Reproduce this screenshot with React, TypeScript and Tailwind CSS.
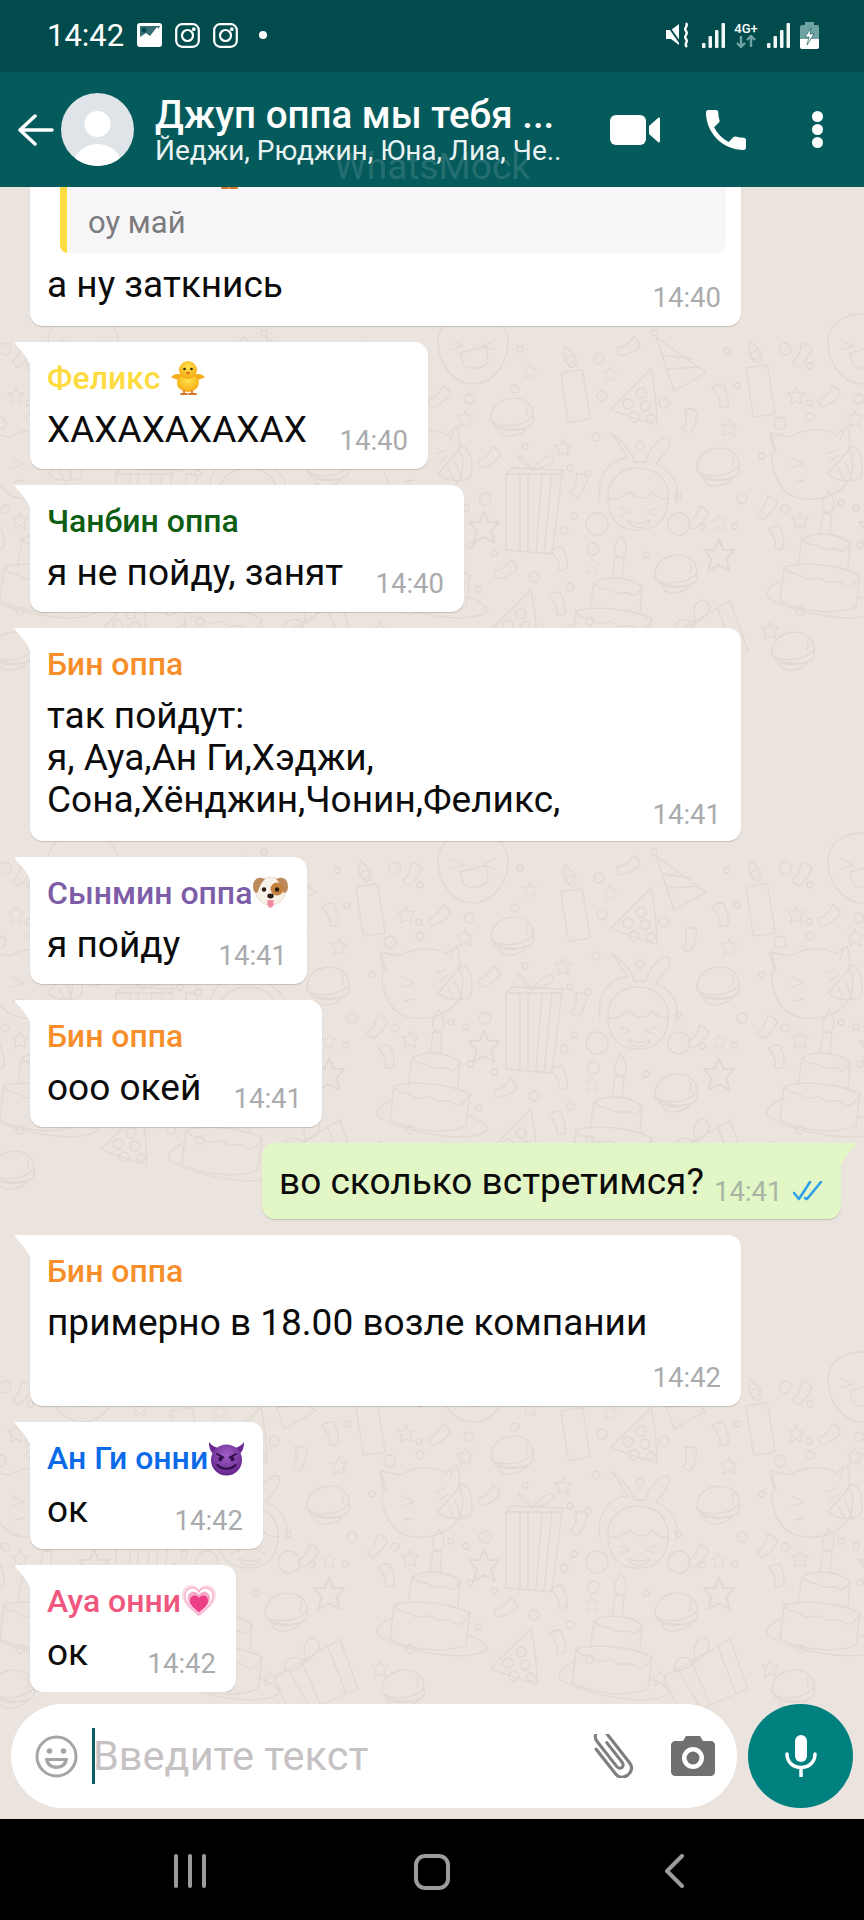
import { ReactNode } from "react";

type MessageProps = {
  name?: string;
  nameColor?: string;
  emoji?: ReactNode;
  time: string;
  width: string;
  bottom?: string;
  timeDrop?: string;
  timeBelow?: boolean;
  children: ReactNode;
};

function Tail() {
  return (
    <svg className="absolute left-[-15px] top-0" width="16" height="24" viewBox="0 0 16 24">
      <path d="M0 0H16V24C12 15 6 8 1 3Q0 1.500 0 0Z" fill="#fff" />
    </svg>
  );
}

function Message({ name, nameColor, emoji, time, width, bottom = "pb-[18px]", timeDrop = "-mb-[5px]", timeBelow, children }: MessageProps) {
  return (
    <div className={`relative shrink-0 rounded-[13px] rounded-tl-none bg-white pl-[17px] pr-[20px] pt-[18px] shadow-[0_1px_1px_rgba(0,0,0,0.16)] ${width} ${bottom}`}>
      <Tail />
      <div className={`flex h-[36px] items-center text-[32px] font-medium leading-[36px] ${nameColor}`}>
        <span className="whitespace-nowrap">{name}</span>
        {emoji}
      </div>
      <div className={timeBelow ? "mt-[13px]" : "mt-[13px] flex items-end justify-between"}>
        <div className="whitespace-pre text-[37px] leading-[42px] text-[#0b0b0b]">{children}</div>
        <div className={`h-[30px] text-right text-[27.500px] leading-[30px] text-[#a9abad] ${timeDrop} ${timeBelow ? "mt-[19px]" : ""}`}>{time}</div>
      </div>
    </div>
  );
}

function Chick() {
  return (
    <svg className="ml-[10px] shrink-0" width="36" height="36" viewBox="0 0 36 36">
      <defs>
        <radialGradient id="chick" cx="50%" cy="35%" r="65%">
          <stop offset="0" stopColor="#ffe24a" />
          <stop offset="1" stopColor="#f6a914" />
        </radialGradient>
      </defs>
      <path d="M1 17C6 13 9 14 12 15L12 21C8 20 4 19 1 17ZM35 17C30 13 27 14 24 15L24 21C28 20 32 19 35 17Z" fill="#f5ad1c" />
      <ellipse cx="18" cy="23" rx="11" ry="9" fill="url(#chick)" />
      <circle cx="18" cy="10" r="9" fill="url(#chick)" />
      <circle cx="14.500" cy="9" r="1.300" fill="#3a2410" />
      <circle cx="21.500" cy="9" r="1.300" fill="#3a2410" />
      <path d="M15.500 12L20.500 12L18 15Z" fill="#e8641a" />
      <path d="M11 34H17M19 34H26M14 31V34M22 31V34" stroke="#d9752a" strokeWidth="1.800" strokeLinecap="round" />
    </svg>
  );
}

function Dog() {
  return (
    <svg className="shrink-0" width="37" height="34" viewBox="0 0 37 34">
      <ellipse cx="18.500" cy="15" rx="15" ry="14" fill="#f8f1e8" stroke="#e2d6c6" strokeWidth="0.800" />
      <path d="M10 2C5 1 1 4 1 11C1 16 4 18 6 16C7 11 9 7 13 3Z" fill="#bd8a5c" />
      <path d="M27 2C32 1 36 4 36 11C36 16 33 18 31 16C30 11 28 7 24 3Z" fill="#bd8a5c" />
      <circle cx="25" cy="13" r="6.500" fill="#c2823d" />
      <circle cx="12" cy="13.500" r="2.200" fill="#2b1b12" />
      <circle cx="25" cy="13.500" r="2.200" fill="#2b1b12" />
      <ellipse cx="18.500" cy="20" rx="3.200" ry="2.400" fill="#2b1b12" />
      <path d="M15.500 24H21.500V28C21.500 33 15.500 33 15.500 28Z" fill="#f08ba0" />
    </svg>
  );
}

function Devil() {
  return (
    <svg className="shrink-0" width="37" height="35" viewBox="0 0 37 35">
      <defs>
        <radialGradient id="devil" cx="50%" cy="35%" r="70%">
          <stop offset="0" stopColor="#a060c8" />
          <stop offset="1" stopColor="#5f1f85" />
        </radialGradient>
      </defs>
      <path d="M1 1C1 8 3 12 8 15L12 7C8 7 4 5 1 1ZM36 1C36 8 34 12 29 15L25 7C29 7 33 5 36 1Z" fill="#6a2a92" />
      <circle cx="18.500" cy="19" r="15.500" fill="url(#devil)" />
      <path d="M9 13L15.500 16.500M28 13L21.500 16.500" stroke="#2e0c48" strokeWidth="1.800" strokeLinecap="round" />
      <ellipse cx="12.500" cy="18" rx="2" ry="2.200" fill="#2e0c48" />
      <ellipse cx="24.500" cy="18" rx="2" ry="2.200" fill="#2e0c48" />
      <path d="M9.500 24C14 29 23 29 27.500 24" stroke="#2e0c48" strokeWidth="2" fill="none" strokeLinecap="round" />
    </svg>
  );
}

function Heart() {
  const d = "M18 33C10 26 1 20 1 11C1 5 5 1 10 1C13.500 1 16.500 3 18 6C19.500 3 22.500 1 26 1C31 1 35 5 35 11C35 20 26 26 18 33Z";
  return (
    <svg className="shrink-0" width="36" height="35" viewBox="0 0 36 35">
      <path d={d} fill="#fbdbe8" />
      <g transform="translate(3 3) scale(0.83)">
        <path d={d} fill="#fff" />
        <path d={d} fill="none" stroke="#f7a9c8" strokeWidth="1.500" />
      </g>
      <g transform="translate(6 7) scale(0.66)">
        <path d={d} fill="#f7a9c8" />
      </g>
      <g transform="translate(8.500 11) scale(0.53)">
        <path d={d} fill="#ec3f86" />
      </g>
    </svg>
  );
}

function Candle({ x, y }: { x: number; y: number }) {
  return (
    <g transform={`translate(${x} ${y}) rotate(-9)`}>
      <rect x="-11" y="-22" width="22" height="50" rx="2" />
      <path d="M0 -26C-6 -32 -7 -38 -2 -48C3 -40 8 -36 6 -30C5 -27 3 -25 0 -26Z" />
      <circle cx="0" cy="-33" r="4" />
    </g>
  );
}

function Burger({ x, y }: { x: number; y: number }) {
  return (
    <g transform={`translate(${x} ${y})`}>
      <path d="M-21 3C-24 -25 22 -28 21 -2C22 2 21 6 18 8C8 13 -12 13 -21 3Z" />
      <path d="M-21 3C-12 10 10 10 21 -2M-18 8C-10 14 8 14 18 8M-14 12C-10 22 8 18 14 11M14 -12C16 -8 15 -5 14 -2" />
    </g>
  );
}

function Face({ x, y }: { x: number; y: number }) {
  return (
    <g transform={`translate(${x} ${y})`}>
      <path d="M-35 -12C-35 -30 -20 -40 0 -40C20 -40 35 -30 35 -12C35 12 18 30 0 30C-18 30 -35 12 -35 -12Z" />
      <path d="M-22 -14L-10 -8L-22 -4M22 -14L10 -8L22 -4M-13 -1L13 -8L15 8C8 16 -6 16 -10 10Z" />
    </g>
  );
}

function StripeHat({ x, y }: { x: number; y: number }) {
  return (
    <g transform={`translate(${x} ${y})`}>
      <path d="M-26 -24L-8 30L24 12ZM-19 -6L10 -2M-14 8L18 6" />
      <circle cx="-28" cy="-28" r="3" />
    </g>
  );
}

function DotHat({ x, y }: { x: number; y: number }) {
  return (
    <g transform={`translate(${x} ${y})`}>
      <path d="M16 -32L-24 8C-12 14 8 20 22 24C22 10 20 -12 16 -32Z" />
      <circle cx="6" cy="-8" r="5" />
      <circle cx="-7" cy="3" r="5" />
      <circle cx="10" cy="5" r="5" />
      <circle cx="-1" cy="16" r="5" />
      <circle cx="16" cy="17" r="4" />
    </g>
  );
}

function Cat({ x, y }: { x: number; y: number }) {
  return (
    <g transform={`translate(${x} ${y})`}>
      <path d="M-42 -31L-22 -27C-8 -36 14 -36 24 -29C28 -32 32 -36 35 -37C38 -30 38 -22 37 -14C44 -4 40 14 34 20C20 38 -14 40 -28 26C-40 12 -42 -8 -38 -14C-40 -20 -42 -26 -42 -31Z" />
      <path d="M-40 -28L-36 -12M32 -34L28 -24M-20 -6L-8 0L-20 4M-18 18L-8 16M14 -10L24 -14M18 -2L26 -8" />
      <path d="M16 10L40 -18C50 -16 52 4 48 14C40 18 24 18 16 10ZM26 4L32 15M33 -2L40 15" />
    </g>
  );
}

function Gift({ x, y }: { x: number; y: number }) {
  return (
    <g transform={`translate(${x} ${y})`}>
      <path d="M-28 -34L28 -34L18 46L-28 42ZM-28 -34L-22 -40L30 -38L28 -34M-14 -34L-14 44M-6 -34L-6 44M8 -34L2 44M18 -34L10 44" />
      <path d="M-2 -38C-16 -50 -18 -54 -14 -52C-8 -48 -4 -44 -2 -38ZM-2 -38C8 -50 18 -56 20 -50C20 -44 8 -40 -2 -38Z" />
    </g>
  );
}

function Girl({ x, y }: { x: number; y: number }) {
  return (
    <g transform={`translate(${x} ${y})`}>
      <path d="M-38 6C-42 -18 -28 -36 -10 -36L-26 -60C-20 -56 -6 -44 -4 -32L8 -32C10 -44 22 -58 30 -56C36 -50 24 -38 18 -30C36 -22 42 -8 38 8" />
      <path d="M-30 8C-32 -14 -18 -26 0 -26C18 -26 32 -14 30 8C28 26 18 36 0 36C-18 36 -28 26 -30 8Z" />
      <path d="M-30 4C-20 8 -14 0 -8 -2C-2 6 10 6 14 -2C20 4 26 6 30 4M-18 14L-8 18L-18 22M18 14L8 18L18 22M-10 26C-2 30 6 30 12 26C10 36 -6 36 -10 26Z" />
      <circle cx="-41" cy="30" r="11" />
      <circle cx="41" cy="30" r="11" />
    </g>
  );
}

function Cake({ x, y }: { x: number; y: number }) {
  return (
    <g transform={`translate(${x} ${y})`}>
      <path d="M-36 -2C-50 4 -58 12 -50 18C-20 34 40 44 58 30C56 24 46 18 38 16" />
      <path d="M-36 -14L-40 20C-16 32 16 34 36 26L40 -6C20 -16 -14 -20 -36 -14Z" />
      <path d="M-36 -14C-30 -4 -24 -10 -18 -4C-10 2 -6 -6 2 -2C10 6 16 -4 24 4C30 8 36 2 40 -6" />
      <path d="M-22 -16L-18 -42C-6 -50 18 -48 30 -38L28 -12" />
      <path d="M-18 -42C-12 -34 -6 -38 0 -34C8 -28 14 -36 20 -30C24 -28 28 -34 30 -38" />
      <path d="M0 -47L3 -68L12 -67L10 -47M6 -68C0 -74 2 -80 9 -90C14 -82 16 -76 12 -70Z" />
    </g>
  );
}

function BoxGift({ x, y }: { x: number; y: number }) {
  return (
    <g transform={`translate(${x} ${y})`}>
      <path d="M-42 4L24 -34L42 16L-24 44ZM-42 4L-24 44M-28 -4L-6 34M-14 -10L4 30M12 -26L30 20" />
      <path d="M-10 -12C-30 -22 -34 -8 -30 -2C-22 -2 -16 -6 -10 -12ZM-10 -12C-16 -30 -6 -40 2 -32C6 -24 0 -18 -10 -12Z" />
    </g>
  );
}

const stars = [
  [339, 947, 8], [465, 938, 8], [406, 915, 8], [530, 890, 7], [610, 893, 7], [563, 967, 8],
  [484, 1047, 15], [719, 1075, 15], [410, 1040, 8], [719, 1042, 7], [592, 1085, 7], [660, 1160, 7], [380, 1150, 8],
];

const dots = [
  [395, 868, 6], [420, 885, 3], [520, 868, 3], [599, 878, 5], [337, 870, 3], [469, 918, 5], [515, 908, 4], [602, 915, 5],
  [664, 922, 5], [390, 942, 6], [420, 936, 4], [347, 905, 3], [419, 922, 3], [596, 956, 4], [640, 964, 4], [525, 966, 3],
  [372, 975, 3], [352, 1018, 5], [485, 1018, 6], [451, 1022, 3], [395, 1028, 4], [466, 1027, 3], [570, 987, 3], [588, 992, 3],
  [574, 1035, 3], [564, 1049, 4], [678, 1015, 3], [593, 1068, 6], [470, 1064, 3], [494, 1072, 3], [646, 1074, 3], [534, 1096, 5],
  [570, 1106, 4], [479, 1108, 3], [702, 1046, 3], [345, 1045, 3], [410, 1130, 4], [590, 1140, 4],
];

const confetti = [
  [412, 875, 20], [439, 917, 40], [628, 867, 50], [332, 915, -30], [489, 978, 40], [377, 1028, 25], [388, 1057, -25],
  [579, 1005, 10], [561, 1078, -30], [505, 1090, 50], [559, 1123, -30], [698, 1038, 30], [690, 940, 0],
];

// one period of the wallpaper, in page coordinates
function Doodles() {
  return (
    <g fill="none" stroke="#e0d8d1" strokeWidth="1.300" strokeLinecap="round" strokeLinejoin="round">
      <Candle x={370} y={907} />
      <Candle x={575} y={912} />
      <Face x={473} y={873} />
      <StripeHat x={682} y={880} />
      <DotHat x={635} y={920} />
      <Burger x={512} y={937} />
      <Burger x={718} y={987} />
      <Burger x={676} y={1094} />
      <Burger x={403} y={1171} />
      <Cat x={422} y={983} />
      <Gift x={534} y={1027} />
      <Girl x={638} y={1013} />
      <Cake x={430} y={1100} />
      <Cake x={612} y={1144} />
      <DotHat x={515} y={1141} />
      <BoxGift x={706} y={1154} />
      {stars.map(([x, y, r], i) => (
        <path key={i} transform={`translate(${x} ${y}) scale(${r / 10})`} d="M0 -11L3 -4L10 -4L5 2L7 10L0 6L-7 10L-5 2L-10 -4L-3 -4Z" />
      ))}
      {dots.map(([x, y, r], i) => (
        <circle key={i} cx={x} cy={y} r={r} />
      ))}
      {confetti.map(([x, y, a], i) => (
        <path key={i} transform={`translate(${x} ${y}) rotate(${a})`} d="M-5 -12C2 -13 6 -11 7 -9C6 -2 6 4 1 11C-2 12 -6 10 -7 8C-3 3 -3 -5 -5 -12Z" />
      ))}
    </g>
  );
}

function Wallpaper() {
  const cols = [-1, 0, 1];
  const rows = [-2, -1, 0, 1];
  return (
    <svg className="absolute inset-0" width="864" height="1632" viewBox="0 187 864 1632">
      {rows.map((r) =>
        cols.map((c) => (
          <g key={`${r}-${c}`} transform={`translate(${c * 390} ${r * 519})`}>
            <Doodles />
          </g>
        )),
      )}
    </svg>
  );
}

function Insta() {
  return (
    <svg width="25" height="25" viewBox="0 0 25 25" fill="none" stroke="#fff" strokeWidth="2.200">
      <rect x="1.200" y="1.200" width="22.600" height="22.600" rx="6" />
      <circle cx="12.500" cy="12.500" r="5.500" />
      <circle cx="18.800" cy="6.200" r="0.800" fill="#fff" />
    </svg>
  );
}

function Signal() {
  return (
    <svg width="23" height="25" viewBox="0 0 23 25" fill="#f2f7f7">
      <rect x="0" y="20" width="3.500" height="5" rx="1" />
      <rect x="6.500" y="13" width="3.500" height="12" rx="1" />
      <rect x="13" y="7" width="3.500" height="18" rx="1" />
      <rect x="19.500" y="0" width="3.500" height="25" rx="1" />
    </svg>
  );
}

function StatusBar() {
  return (
    <div className="flex h-[72px] shrink-0 items-center bg-[#024b4d] pb-[2px] pl-[47px] text-white">
      <span className="w-[90px] text-[31px] leading-none">14:42</span>
      <svg width="25" height="24" viewBox="0 0 25 24">
        <rect width="25" height="24" rx="3" fill="#fff" />
        <circle cx="7" cy="7" r="2.500" fill="#024b4d" />
        <path d="M3 14L9 10L13 13L20 4L22 6V4H23V3H3Z" fill="#024b4d" opacity="0.8" />
      </svg>
      <div className="ml-[13px]">
        <Insta />
      </div>
      <div className="ml-[13px]">
        <Insta />
      </div>
      <div className="ml-[21px] h-[8px] w-[8px] rounded-full bg-white" />
      <div className="ml-auto flex items-center pr-[45px]">
        <svg width="26" height="26" viewBox="0 0 26 26" fill="#fff">
          <path d="M1 8H6L14 2V23L6 17H1Z" />
          <path d="M1 1L16 22" stroke="#024b4d" strokeWidth="2" />
          <path d="M21 1C24 4 18 6 21 9C24 12 18 14 21 17C24 20 18 22 22 25" stroke="#fff" strokeWidth="2.400" fill="none" />
        </svg>
        <div className="ml-[11px]">
          <Signal />
        </div>
        <div className="ml-[8px] flex w-[26px] flex-col items-center">
          <span className="text-[13px] font-medium leading-[13px]">4G+</span>
          <svg width="20" height="13" viewBox="0 0 20 13" fill="none" stroke="#6fa3a3" strokeWidth="2.400">
            <path d="M5 1V12M1 8L5 12L9 8M15 12V1M11 5L15 1L19 5" />
          </svg>
        </div>
        <div className="ml-[8px]">
          <Signal />
        </div>
        <svg className="ml-[10px]" width="19" height="27" viewBox="0 0 19 27">
          <rect x="5" y="0" width="9" height="3" fill="#6fa3a3" />
          <rect x="0" y="3" width="19" height="24" rx="2" fill="#6fa3a3" />
          <path d="M0 17H19V25C19 26 18 27 17 27H2C1 27 0 26 0 25Z" fill="#fff" />
          <path d="M11 6L5 15H9L7 23L14 12H10Z" fill="#fff" stroke="#024b4d" strokeWidth="0.600" />
        </svg>
      </div>
    </div>
  );
}

function Header() {
  return (
    <div className="relative flex h-[115px] shrink-0 items-center bg-[#055a5c] text-white">
      <svg className="ml-[18px] shrink-0" width="36" height="32" viewBox="0 0 36 32" fill="none" stroke="#fff" strokeWidth="3.500" strokeLinecap="round" strokeLinejoin="round">
        <path d="M34 16H3M17 2L2 16L17 30" />
      </svg>
      <svg className="ml-[7px] shrink-0" width="73" height="73" viewBox="0 0 73 73">
        <clipPath id="avatar">
          <circle cx="36.500" cy="36.500" r="36.500" />
        </clipPath>
        <circle cx="36.500" cy="36.500" r="36.500" fill="#dfe4e8" />
        <circle cx="36.500" cy="31" r="13" fill="#fff" />
        <ellipse cx="36.500" cy="74" rx="25" ry="23" fill="#fff" clipPath="url(#avatar)" />
      </svg>
      <div className="ml-[21px] w-[422px] shrink-0">
        <div className="whitespace-nowrap text-[38.500px] font-medium leading-[42px]">Джуп оппа мы тебя ...</div>
        <div className="whitespace-nowrap text-[28px] leading-[30px] text-[#eaf3f3]">Йеджи, Рюджин, Юна, Лиа, Че..</div>
      </div>
      <svg className="ml-[33px] shrink-0" width="50" height="30" viewBox="0 0 50 30" fill="#fff">
        <rect width="36" height="30" rx="6" />
        <path d="M39 11L48 3C49 2 50 3 50 4V26C50 27 49 28 48 27L39 19Z" />
      </svg>
      <svg className="ml-[46px] shrink-0" width="40" height="40" viewBox="3 3 18 18" fill="#fff">
        <path d="M6.620 10.790c1.440 2.830 3.760 5.140 6.590 6.590l2.200-2.200c.270-.270.670-.360 1.020-.240 1.120.370 2.330.570 3.570.570.550 0 1 .450 1 1V20c0 .550-.450 1-1 1-9.390 0-17-7.610-17-17 0-.550.450-1 1-1h3.500c.550 0 1 .450 1 1 0 1.250.200 2.450.57 3.570.110.350.030.740-.250 1.020l-2.200 2.200z" />
      </svg>
      <div className="ml-[66px] flex shrink-0 flex-col gap-[2px]">
        <div className="h-[11px] w-[11px] rounded-full bg-white" />
        <div className="h-[11px] w-[11px] rounded-full bg-white" />
        <div className="h-[11px] w-[11px] rounded-full bg-white" />
      </div>
      <div className="absolute left-[334px] top-[80px] whitespace-nowrap text-[37px] leading-[30px] text-white/15">WhatsMock</div>
    </div>
  );
}

function QuotedMessage() {
  return (
    <div className="relative w-[711px] shrink-0 rounded-[13px] bg-white pb-[18px] pl-[30px] pr-[15px] pt-[14px] shadow-[0_1px_1px_rgba(0,0,0,0.16)]">
      <div className="flex h-[105px] overflow-hidden rounded-[8px] bg-[#f6f5f7]">
        <div className="w-[7px] bg-[#fddc42]" />
        <div className="pl-[21px] pt-[6px]">
          <div className="flex h-[36px] items-center text-[32px] font-medium leading-[36px] text-[#fedb3f]">
            Феликс
            <Chick />
          </div>
          <div className="mt-[13px] text-[31px] leading-[40px] text-[#7b7b7e]">оу май</div>
        </div>
      </div>
      <div className="-ml-[13px] mt-[11px] flex items-end justify-between">
        <div className="pb-[2px] text-[37px] leading-[42px] text-[#0b0b0b]">а ну заткнись</div>
        <div className="-mb-[5px] mr-[5px] h-[30px] text-[27.500px] leading-[30px] text-[#a9abad]">14:40</div>
      </div>
    </div>
  );
}

function SentMessage() {
  return (
    <div className="relative mr-[23px] flex h-[76px] w-[579px] shrink-0 self-end rounded-[13px] rounded-tr-none bg-[#e2f7c5] pl-[17px] pt-[18px] shadow-[0_1px_1px_rgba(0,0,0,0.16)]">
      <svg className="absolute right-[-15px] top-0" width="16" height="24" viewBox="0 0 16 24">
        <path d="M16 0H0V24C4 15 10 8 15 3Q16 1.500 16 0Z" fill="#e2f7c5" />
      </svg>
      <div className="w-[435px] whitespace-nowrap text-[37px] leading-[42px] text-[#0b0b0b]">во сколько встретимся?</div>
      <div className="mt-[16px] h-[30px] w-[79px] text-[27.500px] leading-[30px] text-[#a9b5a6]">14:41</div>
      <svg className="mt-[20px]" width="30" height="20" viewBox="0 0 30 20" fill="none" stroke="#2f9fea" strokeWidth="2.600" strokeLinecap="round" strokeLinejoin="round">
        <path d="M1 12L6 18L17 1M12 17L14 18L28 1" />
      </svg>
    </div>
  );
}

function InputBar() {
  return (
    <div className="relative mb-[11px] ml-[11px] mt-[12px] flex shrink-0 gap-[11px]">
      <div className="flex h-[104px] w-[726px] items-center rounded-full bg-white pl-[24px]">
        <svg className="shrink-0" width="43" height="43" viewBox="0 0 43 43" fill="none" stroke="#a5a5a7" strokeWidth="3">
          <circle cx="21.500" cy="21.500" r="19.500" />
          <circle cx="14.500" cy="16" r="2.800" fill="#a5a5a7" stroke="none" />
          <circle cx="28.500" cy="16" r="2.800" fill="#a5a5a7" stroke="none" />
          <path d="M10 23H33C33 30 28 34 21.500 34C15 34 10 30 10 23Z" fill="#a5a5a7" stroke="none" />
          <path d="M14 26H29C28 29 25 30.500 21.500 30.500C18 30.500 15 29 14 26Z" fill="#fff" stroke="none" />
        </svg>
        <div className="ml-[14px] h-[56px] w-[3px] shrink-0 bg-[#075e5f]" />
        <div className="-ml-[2px] w-[497px] shrink-0 text-[41.500px] leading-[56px] text-[#c6c2c3]">Введите текст</div>
        <svg className="shrink-0" width="44" height="44" viewBox="6 6 32 32" fill="none" stroke="#7f7f81" strokeWidth="2.300" strokeLinecap="round">
          <g transform="rotate(-38 22 22)">
            <path d="M16 11V34C16 42 29 42 29 34V7C29 0 20 0 20 7V30C20 34 25 34 25 30V12" />
          </g>
        </svg>
        <svg className="ml-[37px] shrink-0" width="44" height="40" viewBox="0 0 44 40">
          <path d="M15 0H29L32 5H40C42 5 44 7 44 9V36C44 38 42 40 40 40H4C2 40 0 38 0 36V9C0 7 2 5 4 5H12Z" fill="#707072" />
          <circle cx="22" cy="22" r="11" fill="#fff" />
          <circle cx="22" cy="22" r="6.500" fill="#707072" />
        </svg>
      </div>
      <div className="flex h-[104px] w-[105px] items-center justify-center rounded-full bg-[#00807f]">
        <svg width="32" height="42" viewBox="0 0 32 42" fill="none" stroke="#fff" strokeWidth="3.500" strokeLinecap="round">
          <rect x="10" y="0" width="12" height="27" rx="6" fill="#fff" stroke="none" />
          <path d="M2 19C2 37 30 37 30 19M16 33V41" />
        </svg>
      </div>
    </div>
  );
}

function NavBar() {
  return (
    <div className="flex h-[101px] shrink-0 items-start bg-black pl-[174px] pt-[35px]">
      <div className="flex h-[34px] gap-[10px]">
        <div className="w-[4px] rounded-full bg-[#9c9c9c]" />
        <div className="w-[4px] rounded-full bg-[#9c9c9c]" />
        <div className="w-[4px] rounded-full bg-[#9c9c9c]" />
      </div>
      <div className="ml-[208px] h-[36px] w-[36px] rounded-[11px] border-[4px] border-[#9c9c9c]" />
      <svg className="ml-[214px]" width="20" height="34" viewBox="0 0 20 34" fill="none" stroke="#9c9c9c" strokeWidth="4" strokeLinecap="round" strokeLinejoin="round">
        <path d="M18 2L3 17L18 32" />
      </svg>
    </div>
  );
}

export default function App() {
  return (
    <div className="flex h-[1920px] w-[864px] flex-col overflow-hidden bg-black [font-family:Roboto,sans-serif]">
      <StatusBar />
      <Header />
      <div className="relative flex min-h-0 flex-1 flex-col bg-[#ebe3dd]">
        <Wallpaper />
        <div className="relative flex min-h-0 flex-1 flex-col items-start justify-end gap-[16px] overflow-hidden pl-[30px]">
          <QuotedMessage />
          <Message name="Феликс" nameColor="text-[#fedb3f]" emoji={<Chick />} time="14:40" width="w-[398px]">
            ХАХАХАХАХАХ
          </Message>
          <Message name="Чанбин оппа" nameColor="text-[#0d5d12]" time="14:40" width="w-[434px]">
            я не пойду, занят
          </Message>
          <Message name="Бин оппа" nameColor="text-[#f68f2b]" time="14:41" width="w-[711px]" bottom="pb-[20px]" timeDrop="-mb-[9px]">
            {"так пойдут:\nя, Ауа,Ан Ги,Хэджи,\nСона,Хёнджин,Чонин,Феликс,"}
          </Message>
          <Message name="Сынмин оппа" nameColor="text-[#7e5da8]" emoji={<Dog />} time="14:41" width="w-[277px]">
            я пойду
          </Message>
          <Message name="Бин оппа" nameColor="text-[#f68f2b]" time="14:41" width="w-[292px]">
            ооо окей
          </Message>
          <SentMessage />
          <Message name="Бин оппа" nameColor="text-[#f68f2b]" time="14:42" width="w-[711px]" timeBelow>
            примерно в 18.00 возле компании
          </Message>
          <Message name="Ан Ги онни" nameColor="text-[#0a6ae8]" emoji={<Devil />} time="14:42" width="w-[233px]">
            ок
          </Message>
          <Message name="Ауа онни" nameColor="text-[#f0577e]" emoji={<Heart />} time="14:42" width="w-[206px]">
            ок
          </Message>
        </div>
        <InputBar />
      </div>
      <NavBar />
    </div>
  );
}
